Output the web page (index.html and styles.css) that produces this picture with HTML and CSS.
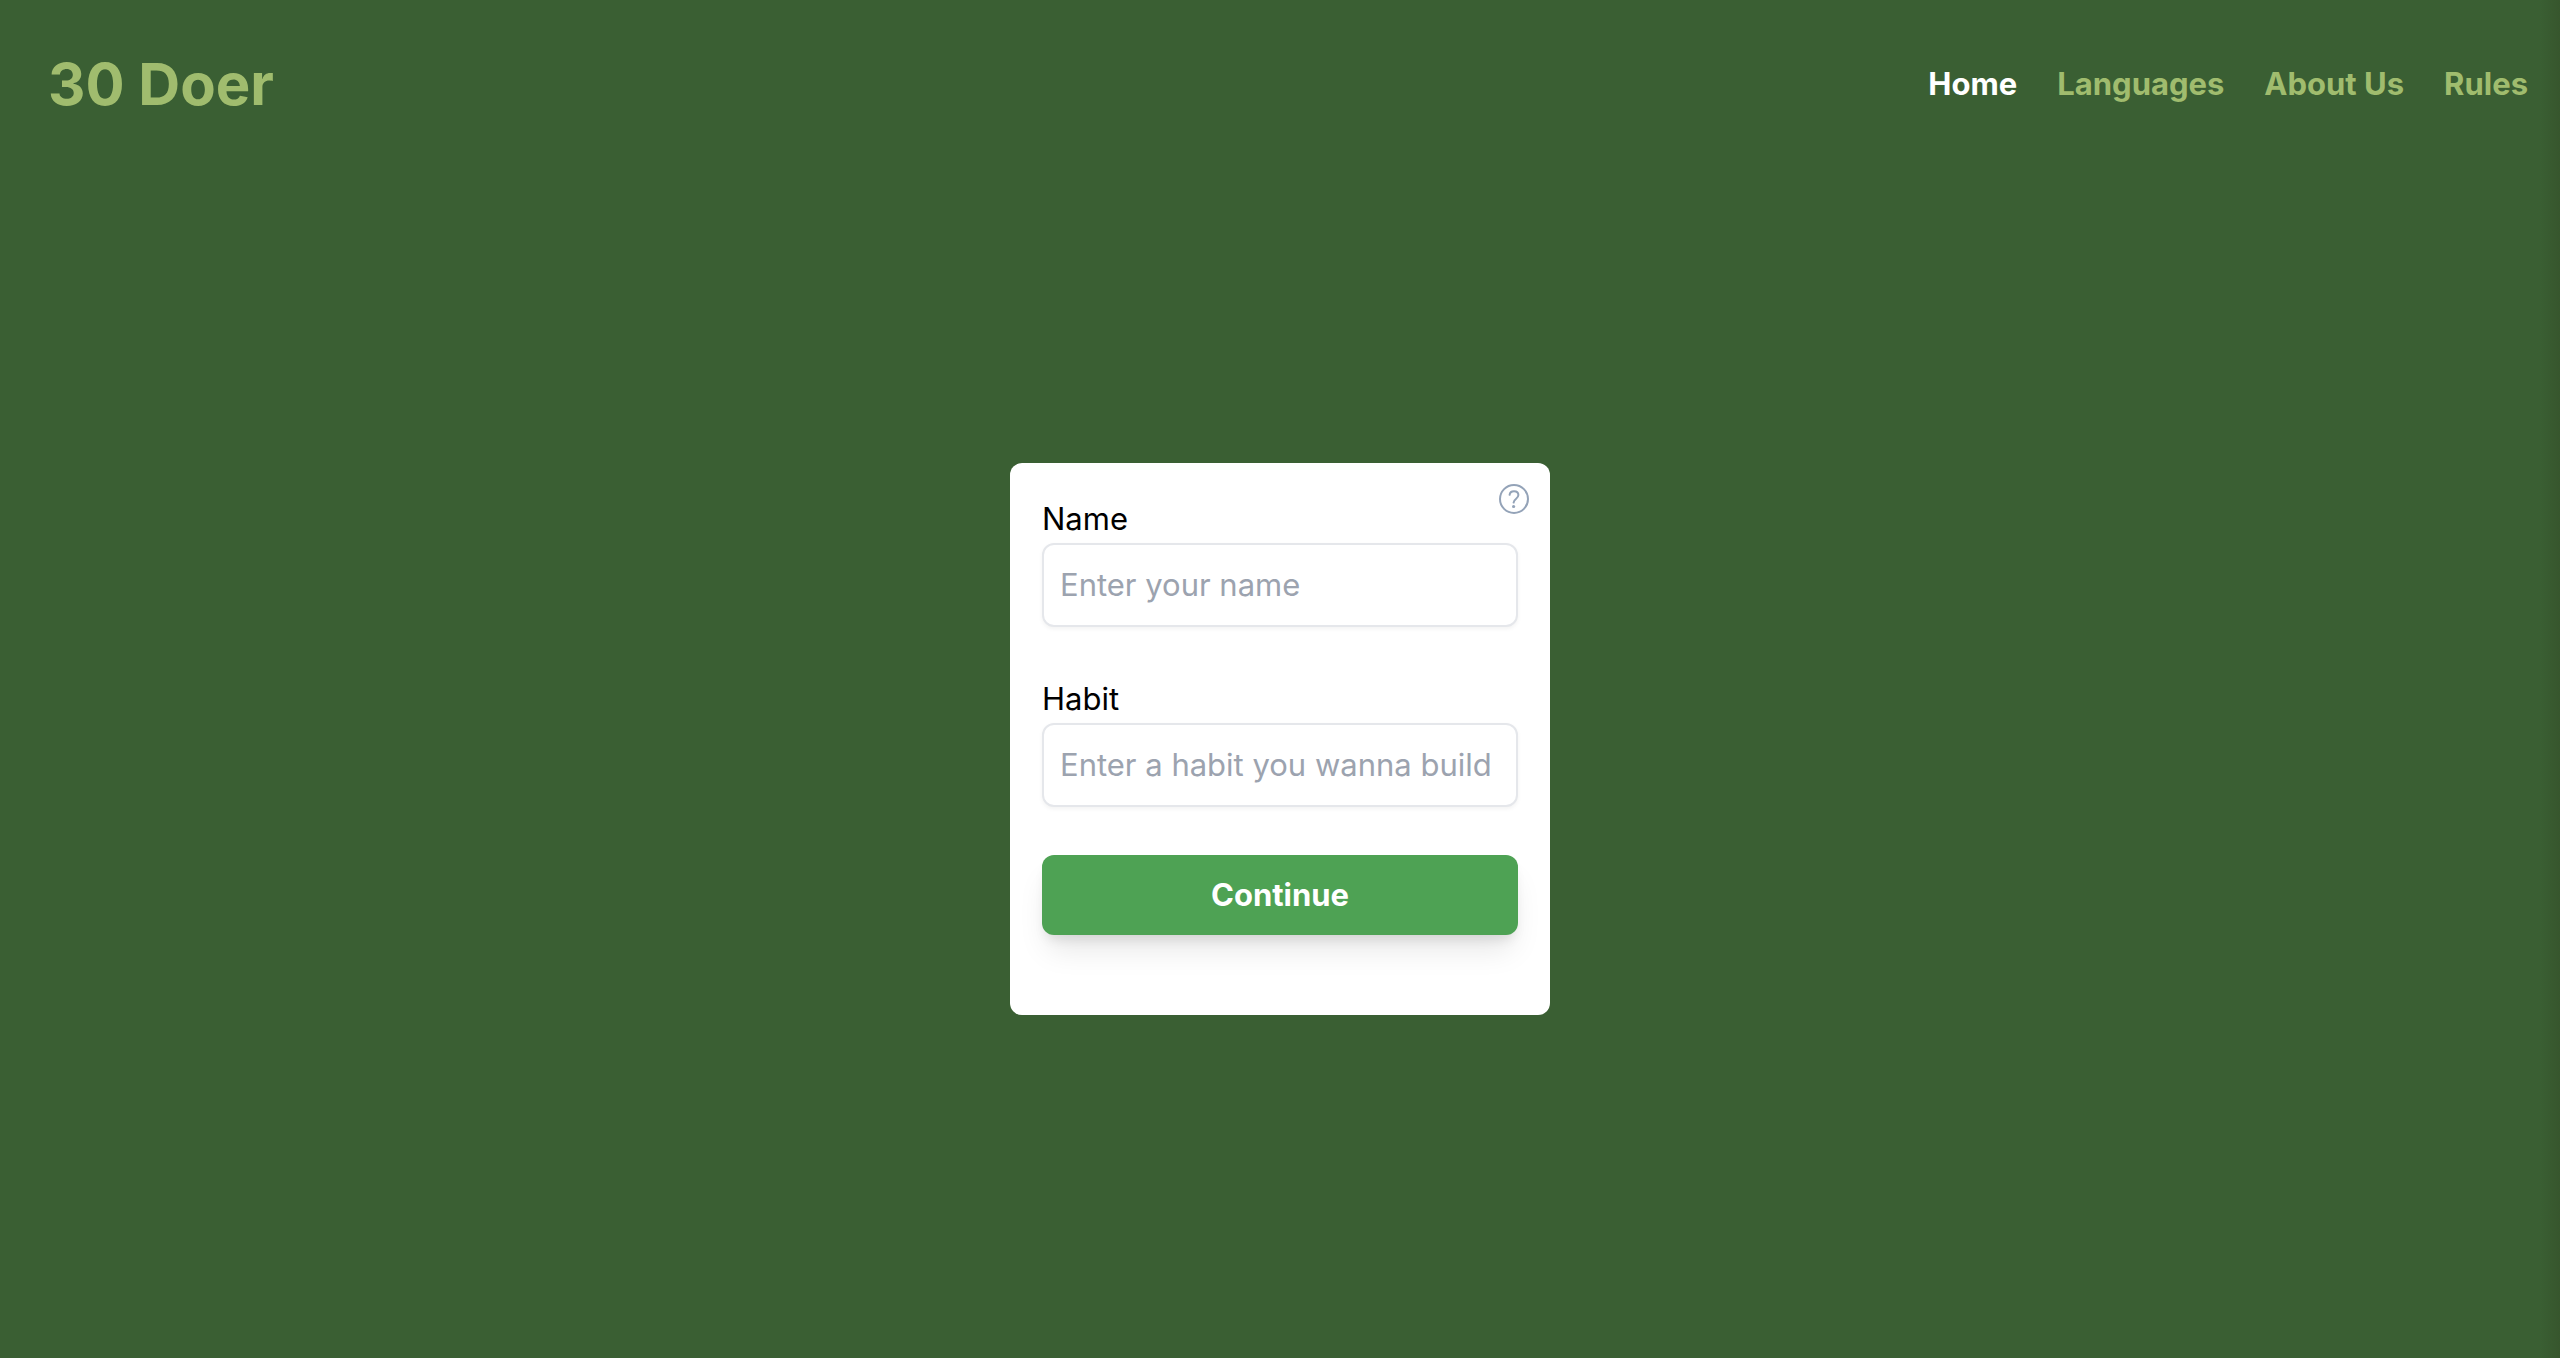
FILE: index.html
```html
<!DOCTYPE html>
<html lang="en">
<head>
    <meta charset="UTF-8">
    <meta name="viewport" content="width=device-width, initial-scale=1.0">
    <title>30 Doer</title>
    <link rel="stylesheet" href="styles.css">
</head>
<body>
    <header class="header">
        <h1 class="logo">30 Doer</h1>
        <nav class="nav">
            <a href="#" class="active">Home</a>
            <a href="#">Languages</a>
            <a href="#">About Us</a>
            <a href="#">Rules</a>
        </nav>
    </header>

    <main class="main">
        <form class="card">
            <button type="button" class="help" aria-label="Help">
                <svg viewBox="0 0 30 30" fill="none" stroke="currentColor" stroke-width="2" stroke-linecap="round">
                    <circle cx="15" cy="15" r="14" />
                    <path d="M10.6 10.8C10.9 8.4 12.6 7.2 15 7.2C17.6 7.2 19.4 8.8 19.4 11.1C19.4 13 18.3 13.9 16.9 15C15.5 16.1 14.7 16.8 14.6 18.6" />
                    <circle cx="14.6" cy="22.5" r="1.6" fill="currentColor" stroke="none" />
                </svg>
            </button>
            <div class="field">
                <label for="name">Name</label>
                <input type="text" id="name" placeholder="Enter your name">
            </div>
            <div class="field">
                <label for="habit">Habit</label>
                <input type="text" id="habit" placeholder="Enter a habit you wanna build">
            </div>
            <button type="submit" class="continue">Continue</button>
        </form>
    </main>
</body>
</html>
```
FILE: styles.css
```css
* {
    box-sizing: border-box;
}

body {
    margin: 0;
    min-height: 100vh;
    display: flex;
    flex-direction: column;
    /* soft shade along the right edge */
    background: linear-gradient(to left, #37562d, #3a5f33 20px);
    font-family: Inter, "Liberation Sans", sans-serif;
    font-size: 31px;
    line-height: 48px;
    color: #000;
}

.header {
    display: flex;
    justify-content: space-between;
    align-items: center;
    padding: 48px 32px 48px 48px;
}

.logo {
    margin: 0;
    font-size: 58px;
    line-height: 72px;
    font-weight: 700;
    color: #a0bc6e;
}

.nav {
    display: flex;
    gap: 40px;
}

.nav a {
    font-weight: 700;
    color: #a0bc6e;
    text-decoration: none;
}

.nav a.active {
    color: #fff;
}

.main {
    flex: 1;
    display: flex;
    justify-content: center;
    align-items: center;
    padding-bottom: 48px;
}

.card {
    position: relative;
    width: 540px;
    padding: 32px 32px 80px;
    background: #fff;
    border-radius: 12px;
}

/* help icon in the corner of the card */
.help {
    position: absolute;
    top: 21px;
    right: 21px;
    padding: 0;
    border: 0;
    background: none;
    color: #94a3b8;
    cursor: pointer;
}

.help svg {
    display: block;
    width: 30px;
    height: 30px;
}

.field {
    display: flex;
    flex-direction: column;
    margin-bottom: 48px;
}

.field input {
    width: 100%;
    padding: 16px;
    border: 2px solid #e5e7eb;
    border-radius: 12px;
    background: #fff;
    box-shadow: 0 2px 4px rgba(0, 0, 0, 0.05);
    font: inherit;
    color: #000;
}

.field input::placeholder {
    color: #9ca3af;
    opacity: 1;
}

.continue {
    display: block;
    width: 100%;
    padding: 16px;
    border: 0;
    border-radius: 12px;
    background: #4ea254;
    box-shadow: 0 20px 30px -6px rgba(0, 0, 0, 0.1), 0 8px 12px -4px rgba(0, 0, 0, 0.1);
    font: inherit;
    font-weight: 700;
    color: #fff;
    cursor: pointer;
}
```
